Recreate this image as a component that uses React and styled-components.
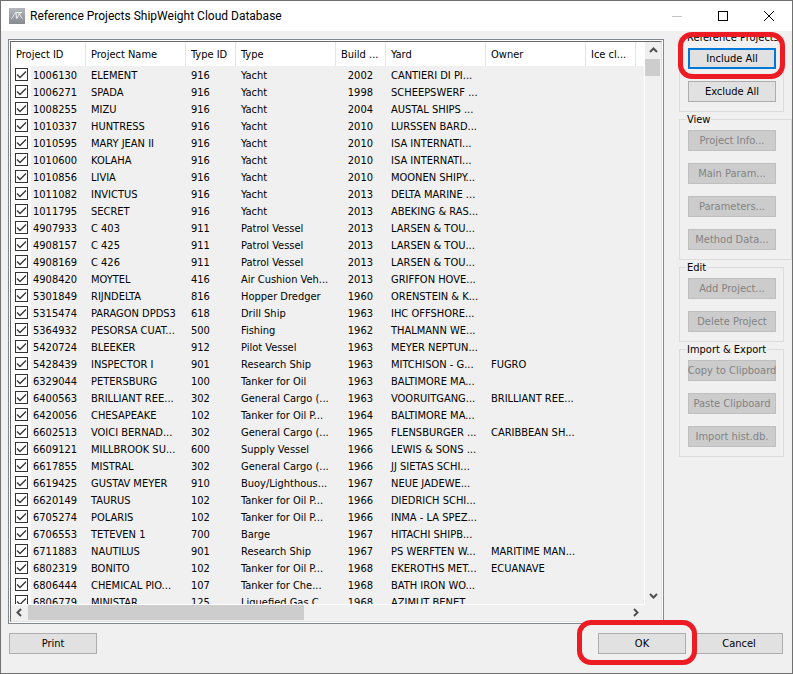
import React, { useState } from "react";
import styled, { createGlobalStyle } from "styled-components";

const GlobalStyle = createGlobalStyle`
  * {
    box-sizing: border-box;
  }
  body {
    margin: 0;
    background: #f0f0f0;
    color: #000;
    font-family: "DejaVu Sans Condensed", "Noto Sans", sans-serif;
    font-size: 11px;
    line-height: 13px;
  }
  button {
    font: inherit;
    color: inherit;
  }
`;

const Window = styled.div`
  display: flex;
  flex-direction: column;
  height: 100vh;
  min-height: 520px;
  border: 1px solid #707070;
  overflow: hidden;
`;

const TitleBar = styled.header`
  display: flex;
  align-items: center;
  flex: none;
  height: 30px;
  padding-left: 8px;
  background: #fff;
`;

const Title = styled.h1`
  flex: 1;
  margin: 0 0 0 5px;
  font-family: Roboto, "Open Sans", sans-serif;
  font-size: 12px;
  line-height: 16px;
  font-weight: 400;
`;

const CaptionButton = styled.button`
  display: flex;
  align-items: center;
  justify-content: center;
  width: 46px;
  height: 30px;
  padding: 0;
  border: none;
  background: none;
`;

const Body = styled.main`
  display: flex;
  flex: 1;
  min-height: 0;
  gap: 15px;
  padding: 0 8px 0 7px;
`;

const ListFrame = styled.section`
  flex: 1;
  min-width: 0;
  margin-top: 8px;
  padding: 1px;
  border: 1px solid #828790;
  background: #fff;
`;

const ListInner = styled.div`
  display: grid;
  grid-template-columns: minmax(0, 1fr) 17px;
  grid-template-rows: minmax(0, 1fr) 17px;
  height: 100%;
  border: 1px solid #696969;
  border-right-color: #e3e3e3;
  border-bottom-color: #e3e3e3;
  background: #f0f0f0;
`;

const Viewport = styled.div`
  overflow: hidden;
`;

const Table = styled.table`
  width: 100%;
  table-layout: fixed;
  border-collapse: separate;
  border-spacing: 0;
`;

const HeadCell = styled.th`
  height: 24px;
  padding: 1px 5px 0;
  border-right: ${(props) => (props.$last ? "none" : "1px solid #e5e5e5")};
  background: #fff;
  font-weight: 400;
  text-align: left;
  white-space: nowrap;
`;

const Cell = styled.td`
  height: 17px;
  padding: ${(props) => (props.$right ? "2px 13px 0 0" : "2px 0 0 5px")};
  text-align: ${(props) => (props.$right ? "right" : "left")};
  line-height: 15px;
  white-space: nowrap;
`;

const IdCell = styled.td`
  height: 17px;
  padding: 0;
`;

const IdLabel = styled.label`
  display: flex;
  height: 17px;
`;

const IdText = styled.span`
  padding-top: 2px;
  line-height: 15px;
`;

const CheckHolder = styled.span`
  position: relative;
  width: 20px;
  margin-right: 2px;
  padding: 2px 3px 2px 4px;
  background: #fff;

  svg {
    position: absolute;
    left: 5px;
    top: 3px;
    pointer-events: none;
  }
`;

const CheckBox = styled.input`
  display: block;
  appearance: none;
  width: 13px;
  height: 13px;
  margin: 0;
  border: 1px solid #333;
  background: #fff;

  &:not(:checked) + svg {
    display: none;
  }
`;

const VerticalBar = styled.div`
  display: flex;
  flex-direction: column;
  border-left: 1px solid #fff;
`;

const HorizontalBar = styled.div`
  display: flex;
  border-top: 1px solid #fff;
`;

const ArrowButton = styled.button`
  display: flex;
  flex: none;
  align-items: center;
  justify-content: center;
  width: ${(props) => (props.$wide ? "17px" : "16px")};
  height: ${(props) => (props.$wide ? "15px" : "17px")};
  padding: 0;
  border: none;
  background: none;
`;

const Track = styled.div`
  flex: 1;
`;

const Thumb = styled.div`
  width: ${(props) => (props.$horizontal ? "46%" : "15px")};
  height: ${(props) => (props.$horizontal ? "15px" : "17px")};
  background: #cdcdcd;
`;

const Sidebar = styled.aside`
  flex: none;
  width: 105px;
`;

const Group = styled.fieldset`
  display: flex;
  flex-direction: column;
  gap: 12px;
  min-width: 0;
  margin: 0 ${(props) => (props.$bleed ? "-8px" : "0")} 1px 0;
  padding: 5px 0 9px 8px;
  border: 1px solid #dcdcdc;
`;

const Legend = styled.legend`
  margin-left: -2px;
  padding: 2px 1px 0;
  line-height: 10px;
  white-space: nowrap;
`;

const PushButton = styled.button`
  display: flex;
  align-items: center;
  justify-content: center;
  width: 88px;
  height: 21px;
  padding: 0;
  border: 1px solid #adadad;
  background: #e1e1e1;
  white-space: nowrap;

  &:disabled {
    border-color: #bfbfbf;
    background: #ccc;
    color: #838383;
  }

  ${(props) => props.$default && "border: 2px solid #0078d7;"}
`;

const Marked = styled.div`
  position: relative;
  display: flex;
`;

const Marker = styled.span`
  position: absolute;
  inset: ${(props) => props.$inset};
  z-index: 1;
  border: 5px solid #ed1c24;
  border-radius: 14px;
  pointer-events: none;
`;

const Footer = styled.footer`
  display: flex;
  flex: none;
  gap: 9px;
  padding: 9px 9px 19px 8px;
`;

const Spacer = styled.div`
  flex: 1;
`;

const columns = [
  { name: "Project ID", width: 75 },
  { name: "Project Name", width: 100 },
  { name: "Type ID", width: 50 },
  { name: "Type", width: 100 },
  { name: "Build ...", width: 50 },
  { name: "Yard", width: 100 },
  { name: "Owner", width: 100 },
  { name: "Ice cl...", width: 50 },
];

const projects = [
  ["1006130", "ELEMENT", "916", "Yacht", "2002", "CANTIERI DI PI..."],
  ["1006271", "SPADA", "916", "Yacht", "1998", "SCHEEPSWERF ..."],
  ["1008255", "MIZU", "916", "Yacht", "2004", "AUSTAL SHIPS ..."],
  ["1010337", "HUNTRESS", "916", "Yacht", "2010", "LURSSEN BARD..."],
  ["1010595", "MARY JEAN II", "916", "Yacht", "2010", "ISA INTERNATI..."],
  ["1010600", "KOLAHA", "916", "Yacht", "2010", "ISA INTERNATI..."],
  ["1010856", "LIVIA", "916", "Yacht", "2010", "MOONEN SHIPY..."],
  ["1011082", "INVICTUS", "916", "Yacht", "2013", "DELTA MARINE ..."],
  ["1011795", "SECRET", "916", "Yacht", "2013", "ABEKING & RAS..."],
  ["4907933", "C 403", "911", "Patrol Vessel", "2013", "LARSEN & TOU..."],
  ["4908157", "C 425", "911", "Patrol Vessel", "2013", "LARSEN & TOU..."],
  ["4908169", "C 426", "911", "Patrol Vessel", "2013", "LARSEN & TOU..."],
  ["4908420", "MOYTEL", "416", "Air Cushion Veh...", "2013", "GRIFFON HOVE..."],
  ["5301849", "RIJNDELTA", "816", "Hopper Dredger", "1960", "ORENSTEIN & K..."],
  ["5315474", "PARAGON DPDS3", "618", "Drill Ship", "1963", "IHC OFFSHORE..."],
  ["5364932", "PESORSA CUAT...", "500", "Fishing", "1962", "THALMANN WE..."],
  ["5420724", "BLEEKER", "912", "Pilot Vessel", "1963", "MEYER NEPTUN..."],
  ["5428439", "INSPECTOR I", "901", "Research Ship", "1963", "MITCHISON - G...", "FUGRO"],
  ["6329044", "PETERSBURG", "100", "Tanker for Oil", "1963", "BALTIMORE MA..."],
  ["6400563", "BRILLIANT REE...", "302", "General Cargo (...", "1963", "VOORUITGANG...", "BRILLIANT REE..."],
  ["6420056", "CHESAPEAKE", "102", "Tanker for Oil P...", "1964", "BALTIMORE MA..."],
  ["6602513", "VOICI BERNAD...", "302", "General Cargo (...", "1965", "FLENSBURGER ...", "CARIBBEAN SH..."],
  ["6609121", "MILLBROOK SU...", "600", "Supply Vessel", "1966", "LEWIS & SONS ..."],
  ["6617855", "MISTRAL", "302", "General Cargo (...", "1966", "JJ SIETAS SCHI..."],
  ["6619425", "GUSTAV MEYER", "910", "Buoy/Lighthous...", "1967", "NEUE JADEWE..."],
  ["6620149", "TAURUS", "102", "Tanker for Oil P...", "1966", "DIEDRICH SCHI..."],
  ["6705274", "POLARIS", "102", "Tanker for Oil P...", "1966", "INMA - LA SPEZ..."],
  ["6706553", "TETEVEN 1", "700", "Barge", "1967", "HITACHI SHIPB..."],
  ["6711883", "NAUTILUS", "901", "Research Ship", "1967", "PS WERFTEN W...", "MARITIME MAN..."],
  ["6802319", "BONITO", "102", "Tanker for Oil P...", "1968", "EKEROTHS MET...", "ECUANAVE"],
  ["6806444", "CHEMICAL PIO...", "107", "Tanker for Che...", "1968", "BATH IRON WO..."],
  ["6806779", "MINISTAR", "125", "Liquefied Gas C...", "1968", "AZIMUT BENET..."],
];

const arrows = {
  up: "M1 6 L4.5 2.5 L8 6",
  down: "M1 3 L4.5 6.5 L8 3",
  left: "M6 1 L2.5 4.5 L6 8",
  right: "M3 1 L6.5 4.5 L3 8",
};

const Arrow = ({ direction }) => (
  <svg width="9" height="9" viewBox="0 0 9 9" fill="none" stroke="#505050" strokeWidth="2">
    <path d={arrows[direction]} />
  </svg>
);

const AppIcon = () => (
  <svg width="16" height="16" viewBox="0 0 16 16">
    <defs>
      <linearGradient id="icon-bg" x1="0" y1="0" x2="0" y2="1">
        <stop offset="0" stopColor="#b4b7bc" />
        <stop offset="1" stopColor="#868a91" />
      </linearGradient>
    </defs>
    <rect width="16" height="16" fill="url(#icon-bg)" />
    <g fill="none" stroke="#eef0f2" strokeWidth="1">
      <path d="M2 10.500 C4 10.500 5 5 7 4.500 L7.500 10.500" />
      <path d="M6.500 4.500 H13" />
      <path d="M8 10.500 C9 9 9.500 6 12 4.500" />
      <path d="M9.500 5 C11 6 11.500 9 13.500 10.500" />
    </g>
  </svg>
);

const ProjectRow = ({ project, checked, onToggle }) => {
  const [id, name, typeId, type, year, yard, owner] = project;
  return (
    <tr>
      <IdCell>
        <IdLabel>
          <CheckHolder>
            <CheckBox type="checkbox" checked={checked} onChange={onToggle} />
            <svg width="11" height="11" viewBox="0 0 11 11" fill="none" stroke="#333" strokeWidth="1.3">
              <path d="M1 5.500 L4 8.500 L10 2.500" />
            </svg>
          </CheckHolder>
          <IdText>{id}</IdText>
        </IdLabel>
      </IdCell>
      <Cell>{name}</Cell>
      <Cell>{typeId}</Cell>
      <Cell>{type}</Cell>
      <Cell $right>{year}</Cell>
      <Cell>{yard}</Cell>
      <Cell>{owner}</Cell>
      <Cell />
      <Cell />
    </tr>
  );
};

const App = () => {
  const [selected, setSelected] = useState(projects.map((p) => p[0]));

  function toggle(id) {
    setSelected(
      selected.includes(id) ? selected.filter((s) => s !== id) : [...selected, id]
    );
  }

  return (
    <Window>
      <GlobalStyle />
      <TitleBar>
        <AppIcon />
        <Title>Reference Projects ShipWeight Cloud Database</Title>
        <CaptionButton aria-label="Minimize" disabled>
          <svg width="10" height="10">
            <path d="M0 5.500 H10" stroke="#c4c4c4" />
          </svg>
        </CaptionButton>
        <CaptionButton aria-label="Maximize">
          <svg width="10" height="10">
            <rect x="0.500" y="0.500" width="9" height="9" fill="none" stroke="#000" />
          </svg>
        </CaptionButton>
        <CaptionButton aria-label="Close">
          <svg width="10" height="10">
            <path d="M0 0 L10 10 M10 0 L0 10" stroke="#000" />
          </svg>
        </CaptionButton>
      </TitleBar>

      <Body>
        <ListFrame>
          <ListInner>
            <Viewport>
              <Table>
                <colgroup>
                  {columns.map((c) => (
                    <col key={c.name} width={c.width} />
                  ))}
                  <col />
                </colgroup>
                <thead>
                  <tr>
                    {columns.map((c) => (
                      <HeadCell key={c.name}>{c.name}</HeadCell>
                    ))}
                    <HeadCell $last />
                  </tr>
                </thead>
                <tbody>
                  {projects.map((p) => (
                    <ProjectRow
                      key={p[0]}
                      project={p}
                      checked={selected.includes(p[0])}
                      onToggle={() => toggle(p[0])}
                    />
                  ))}
                </tbody>
              </Table>
            </Viewport>
            <VerticalBar>
              <ArrowButton aria-label="Scroll up">
                <Arrow direction="up" />
              </ArrowButton>
              <Track>
                <Thumb />
              </Track>
              <ArrowButton aria-label="Scroll down">
                <Arrow direction="down" />
              </ArrowButton>
            </VerticalBar>
            <HorizontalBar>
              <ArrowButton $wide aria-label="Scroll left">
                <Arrow direction="left" />
              </ArrowButton>
              <Track>
                <Thumb $horizontal />
              </Track>
              <ArrowButton $wide aria-label="Scroll right">
                <Arrow direction="right" />
              </ArrowButton>
            </HorizontalBar>
          </ListInner>
        </ListFrame>

        <Sidebar>
          <Group>
            <Legend>Reference Projects</Legend>
            <Marked>
              <PushButton $default onClick={() => setSelected(projects.map((p) => p[0]))}>
                Include All
              </PushButton>
              <Marker $inset="-16px -2px -10px -10px" />
            </Marked>
            <PushButton onClick={() => setSelected([])}>Exclude All</PushButton>
          </Group>
          <Group $bleed>
            <Legend>View</Legend>
            <PushButton disabled>Project Info...</PushButton>
            <PushButton disabled>Main Param...</PushButton>
            <PushButton disabled>Parameters...</PushButton>
            <PushButton disabled>Method Data...</PushButton>
          </Group>
          <Group>
            <Legend>Edit</Legend>
            <PushButton disabled>Add Project...</PushButton>
            <PushButton disabled>Delete Project</PushButton>
          </Group>
          <Group>
            <Legend>Import &amp; Export</Legend>
            <PushButton disabled>Copy to Clipboard</PushButton>
            <PushButton disabled>Paste Clipboard</PushButton>
            <PushButton disabled>Import hist.db.</PushButton>
          </Group>
        </Sidebar>
      </Body>

      <Footer>
        <PushButton>Print</PushButton>
        <Spacer />
        <Marked>
          <PushButton>OK</PushButton>
          <Marker $inset="-13px -11px -11px -21px" />
        </Marked>
        <PushButton>Cancel</PushButton>
      </Footer>
    </Window>
  );
};

export default App;
